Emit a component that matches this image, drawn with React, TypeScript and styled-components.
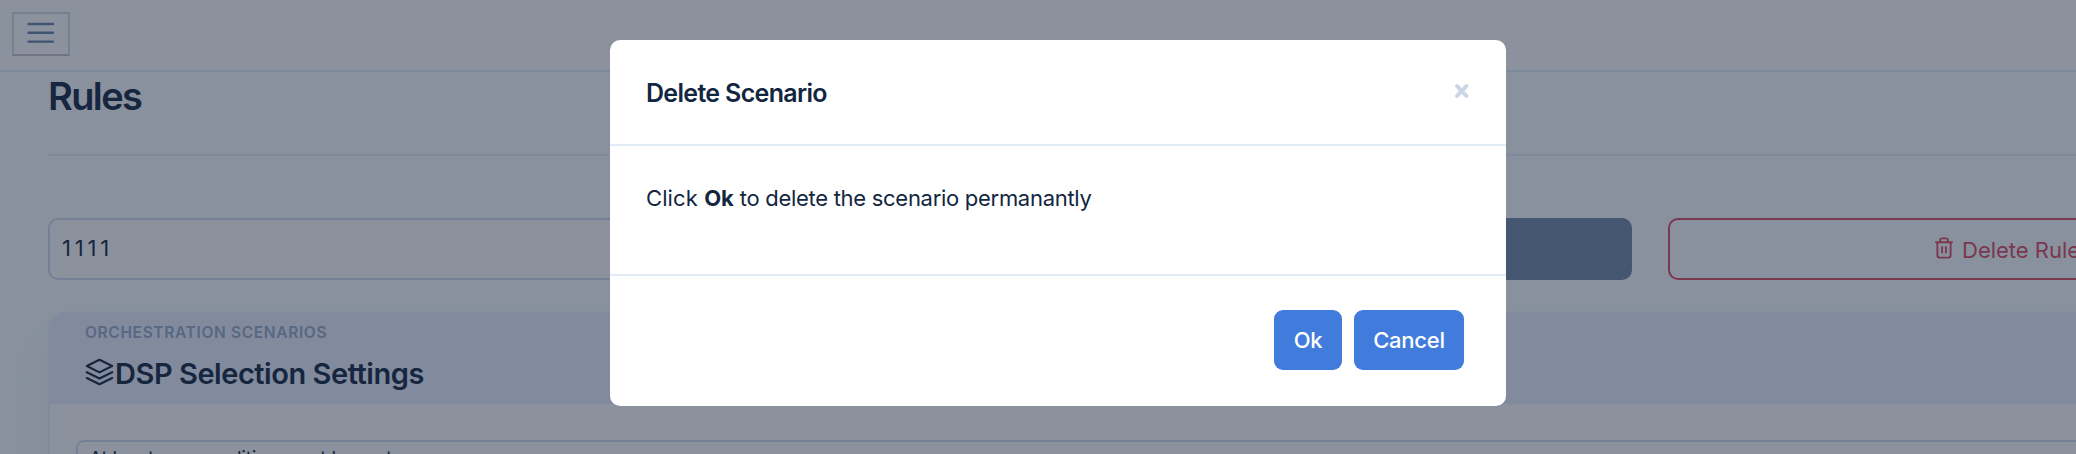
import React from "react";
import styled, { createGlobalStyle } from "styled-components";

const GlobalStyle = createGlobalStyle`
  * { box-sizing: border-box; }
  body {
    margin: 0;
    height: 454px;
    overflow: hidden;
    background: #f6fdfd;
    color: #12263f;
    font-family: Inter, "Liberation Sans", sans-serif;
    font-size: 22px;
  }
`;

const Page = styled.div`
  height: 454px;
  overflow: hidden;
`;

const TopBar = styled.header`
  height: 72px;
  padding: 12px;
  background: #fdfffd;
  border-bottom: 2px solid #e3ecf9;
`;

const MenuButton = styled.button`
  display: flex;
  align-items: flex-start;
  width: 58px;
  height: 44px;
  padding: 7px 0 0 12px;
  background: transparent;
  border: 2px solid #d6d8de;
  border-bottom-color: #c2c3ca;
`;

const PageHeader = styled.div`
  height: 84px;
  margin-left: 48px;
  border-bottom: 2px solid #e3ecf9;
`;

const PageTitle = styled.h1`
  margin: 0;
  padding-top: 4px;
  font-size: 38px;
  line-height: 41px;
  font-weight: 600;
  letter-spacing: -1.6px;
`;

const ActionRow = styled.div`
  display: grid;
  grid-template-columns: repeat(3, 774px);
  gap: 36px;
  margin: 62px 0 0 48px;
  height: 62px;
`;

const NameInput = styled.div`
  border: 2px solid #cfdbee;
  border-radius: 10px;
  background: #fdfffd;
  padding: 0 0 2px 12px;
  line-height: 56px;
  letter-spacing: 3.8px;
`;

const SaveButton = styled.div`
  border-radius: 10px;
  background: #7086a2;
`;

const DeleteButton = styled.div`
  display: flex;
  align-items: center;
  gap: 9px;
  padding: 2px 0 0 265px;
  border: 2px solid #db4a5e;
  border-radius: 10px;
  color: #db4a5e;
  white-space: nowrap;
`;

const TrashIcon = styled.svg`
  margin-bottom: 4px;
`;

const Card = styled.section`
  margin: 32px -20px 0 48px;
  border: 2px solid #ebf0fc;
  border-top: 0;
  border-radius: 16px;
  background: #fdfffd;
  box-shadow: 0 24px 48px rgba(60, 10, 63, 0.04);
  height: 300px;
  overflow: hidden;
`;

const CardHeader = styled.div`
  height: 92px;
  padding: 10px 0 0 35px;
  background: #ebf0fc;
`;

const Kicker = styled.div`
  font-size: 15.5px;
  line-height: 21px;
  font-weight: 600;
  letter-spacing: 0.65px;
  color: #95aac9;
`;

const CardTitle = styled.h2`
  display: flex;
  align-items: center;
  margin: 12px 0 0;
  font-size: 29px;
  line-height: 37px;
  font-weight: 600;
  letter-spacing: -0.46px;
`;

const LayersIcon = styled.svg`
  margin: 0 1px 3px 0;
`;

const ConditionSelect = styled.div`
  height: 60px;
  margin: 36px 0 0 26px;
  padding: 5px 0 0 11px;
  border: 2px solid #cfdbee;
  border-radius: 8px;
  font-size: 19px;
  line-height: 24px;
  letter-spacing: -0.25px;
`;

const Backdrop = styled.div`
  position: fixed;
  inset: 0;
  display: flex;
  align-items: flex-start;
  justify-content: center;
  padding: 40px 0 0 40px;
  background: rgba(25, 38, 62, 0.5);
`;

const Modal = styled.div`
  width: 896px;
  height: 366px;
  border-radius: 10px;
  background: #fff;
`;

const ModalHeader = styled.div`
  display: flex;
  justify-content: space-between;
  height: 106px;
  padding: 38px 36px 0;
  border-bottom: 2px solid #e3ebf6;
`;

const ModalTitle = styled.h4`
  margin: 0;
  font-size: 25px;
  line-height: 31px;
  font-weight: 600;
  letter-spacing: -0.68px;
`;

const CloseIcon = styled.svg`
  margin-top: 5px;
`;

const ModalBody = styled.div`
  height: 130px;
  padding: 37px 36px;
  border-bottom: 2px solid #e3ebf6;
  line-height: 30px;
  white-space: nowrap;
`;

const Run = styled.span<{ $spacing: number }>`
  letter-spacing: ${(p) => p.$spacing}px;
`;

const ModalFooter = styled.div`
  display: flex;
  justify-content: flex-end;
  gap: 12px;
  padding: 34px 42px;
`;

const Button = styled.button<{ $width: number }>`
  width: ${(p) => p.$width}px;
  height: 60px;
  padding: 0;
  border: 0;
  border-radius: 9px;
  background: #417cdd;
  color: #fff;
  font: 500 22px Inter, "Liberation Sans", sans-serif;
  letter-spacing: -0.25px;
`;

export default function App() {
  return (
    <>
      <GlobalStyle />
      <Page>
        <TopBar>
          <MenuButton aria-label="Menu">
            <svg width="30" height="26" viewBox="0 0 30 26" stroke="#6883ab" strokeWidth="2.4" strokeLinecap="round">
              <path d="M2.5 3H27M2.5 11.8H27M2.5 20.6H27" />
            </svg>
          </MenuButton>
        </TopBar>
        <PageHeader>
          <PageTitle>Rules</PageTitle>
        </PageHeader>
        <ActionRow>
          <NameInput>1111</NameInput>
          <SaveButton />
          <DeleteButton>
            <TrashIcon width="18" height="22" viewBox="0 0 18 22" fill="none" stroke="currentColor" strokeWidth="1.9" strokeLinecap="round" strokeLinejoin="round">
              <path d="M1 5.2H17M2.4 5.2V18.6Q2.4 20.6 4.4 20.6H13.6Q15.6 20.6 15.6 18.6V5.2M5.2 5V3Q5.2 1.4 6.8 1.4H11.2Q12.8 1.4 12.8 3V5M7.1 10V15.6M10.9 10V15.6" />
            </TrashIcon>
            <span>Delete Rule</span>
          </DeleteButton>
        </ActionRow>
        <Card>
          <CardHeader>
            <Kicker>ORCHESTRATION SCENARIOS</Kicker>
            <CardTitle>
              <LayersIcon width="29" height="29" viewBox="0 0 24 24" fill="none" stroke="currentColor" strokeWidth="1.8" strokeLinecap="round" strokeLinejoin="round">
                <path d="M12 1.5L22.5 6.7L12 11.9L1.5 6.7ZM1.5 11.8L12 17L22.5 11.8M1.5 16.6L12 21.8L22.5 16.6" />
              </LayersIcon>
              DSP Selection Settings
            </CardTitle>
          </CardHeader>
          <ConditionSelect>At least one condition must be met</ConditionSelect>
        </Card>
      </Page>
      <Backdrop>
        <Modal role="dialog">
          <ModalHeader>
            <ModalTitle>Delete Scenario</ModalTitle>
            <CloseIcon width="16" height="16" viewBox="0 0 16 16" stroke="#cbd6e6" strokeWidth="4" strokeLinecap="round">
              <path d="M3 3.2L12.4 12.8M12.4 3.2L3 12.8" />
            </CloseIcon>
          </ModalHeader>
          <ModalBody>
            <Run $spacing={0.1}>Click </Run>
            <b>Ok</b>
            <Run $spacing={-0.29}> to delete the scenario permanantly</Run>
          </ModalBody>
          <ModalFooter>
            <Button $width={68}>Ok</Button>
            <Button $width={110}>Cancel</Button>
          </ModalFooter>
        </Modal>
      </Backdrop>
    </>
  );
}
